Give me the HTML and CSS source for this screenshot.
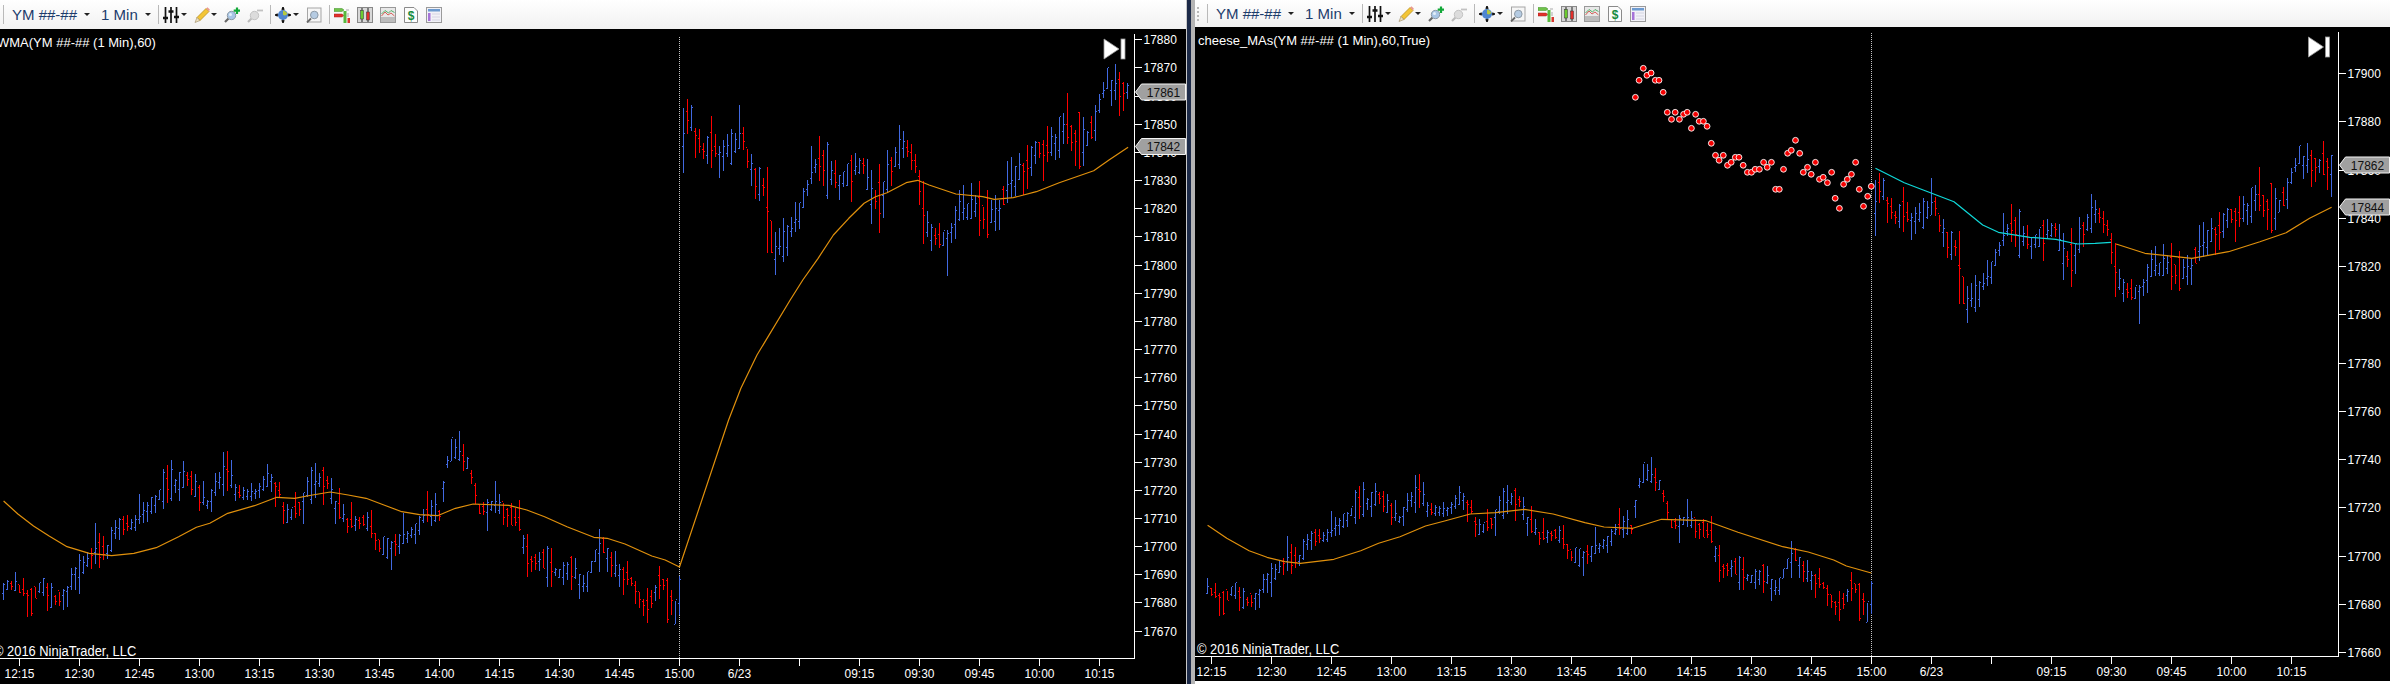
FILE: index.html
```html
<!DOCTYPE html>
<html lang="en">
<head>
<meta charset="utf-8">
<title>NinjaTrader charts</title>
<link rel="stylesheet" href="styles.css">
</head>
<body>
<svg class="sprite" aria-hidden="true">
  <symbol id="i-sliders" viewBox="0 0 16 16">
    <path d="M2.5 0v16M8 0v16M13.5 0v16" stroke="#111" stroke-width="1.7" fill="none"/>
    <path d="M0 11h5M5.5 4.5h5M11 10h5" stroke="#111" stroke-width="2.6" fill="none"/>
  </symbol>
  <symbol id="i-pencil" viewBox="0 0 16 16">
    <path d="M3 10.5 12 1.5l3 3-9 9z" fill="#f3c536" stroke="#b98f1e" stroke-width=".8"/>
    <path d="M3 10.5 1 15.5l5-2z" fill="#efe0bd" stroke="#9a8a60" stroke-width=".6"/>
    <path d="M12 1.500 13.500.2l2.300 2.300L15 4.500z" fill="#e99a8f"/>
  </symbol>
  <symbol id="i-zoomin" viewBox="0 0 16 16">
    <path d="M4.500 11.500 1 15" stroke="#666" stroke-width="2.200"/>
    <circle cx="7.500" cy="8.500" r="4.200" fill="#a9c6e6" stroke="#8d9aa6"/>
    <circle cx="6.500" cy="7.500" r="1.500" fill="#e4eff9"/>
    <path d="M13 .5v6.500M9.700 3.700h6.600" stroke="#12a838" stroke-width="2.200"/>
  </symbol>
  <symbol id="i-zoomout" viewBox="0 0 16 16">
    <path d="M4.500 11.500 1 15" stroke="#bbb" stroke-width="2.200"/>
    <circle cx="7.500" cy="8.500" r="4.200" fill="#dcdcdc" stroke="#c4c4c4"/>
    <path d="M10 3.500h6" stroke="#c2c2c2" stroke-width="1.800"/>
  </symbol>
  <symbol id="i-globe" viewBox="0 0 16 16">
    <path d="M8 0v16M0 8h16" stroke="#111" stroke-width="1.600"/>
    <path d="M8 0 10 2.500H6zM8 16l2-2.500H6zM0 8l2.500-2v4zM16 8l-2.500-2v4z" fill="#111"/>
    <circle cx="8" cy="8" r="5" fill="#4f86d0"/>
    <path d="M8 3.500q3.500.5 4.300 3.500-2 2.500-4.300.8z" fill="#b6c93f"/>
  </symbol>
  <symbol id="i-zoombox" viewBox="0 0 16 16">
    <rect x="1.500" y="1" width="13.500" height="14" fill="#f6f6f6" stroke="#a5a5a5"/>
    <path d="M5 11.500 1 15.500" stroke="#666" stroke-width="1.800"/>
    <circle cx="8.300" cy="8" r="3.800" fill="#b5cbe2" stroke="#8d9aa6"/>
  </symbol>
  <symbol id="i-indic" viewBox="0 0 16 16">
    <path d="M0 1.500h8l2 1.500-2 1.500H0z" fill="#6fc24a" stroke="#3c8f25" stroke-width=".5"/>
    <path d="M0 7h8l2 1.500-2 1.500H0z" fill="#e2302a" stroke="#a3211d" stroke-width=".5"/>
    <rect x="9.500" y="4" width="3" height="12" fill="#57b93d"/>
    <rect x="13.500" y="11" width="2.500" height="5" fill="#d9372e"/>
    <path d="M12 3h3M14 6v4" stroke="#aaa"/>
  </symbol>
  <symbol id="i-candles" viewBox="0 0 16 16">
    <rect x=".5" y=".5" width="15" height="15" fill="#d8d8d8" stroke="#888"/>
    <path d="M5 1v14M11 1v14" stroke="#222"/>
    <rect x="3.500" y="3.500" width="3" height="8.500" fill="#6bcb2f" stroke="#333" stroke-width=".5"/>
    <rect x="9.500" y="5" width="3" height="8" fill="#e22e2a" stroke="#333" stroke-width=".5"/>
  </symbol>
  <symbol id="i-lines" viewBox="0 0 16 16">
    <rect x=".5" y=".5" width="15" height="15" fill="#e8e8e8" stroke="#999"/>
    <rect x="1" y="10" width="14" height="5" fill="#bcbcbc"/>
    <path d="M1.500 9 5 5l3 3 3-2 3.500 3" stroke="#d8605a" fill="none"/>
    <path d="M1.500 7 5 3.500l3.500 2.500 2.500-2.500 3.500 2" stroke="#55b06a" fill="none"/>
  </symbol>
  <symbol id="i-dollar" viewBox="0 0 14 16">
    <path d="M.5.500h9.500l3.500 3.500v11.500H.5z" fill="#fcfcfc" stroke="#8a8a8a"/>
    <text x="7" y="12.800" class="dollar">$</text>
  </symbol>
  <symbol id="i-panel" viewBox="0 0 16 16">
    <rect x=".5" y=".5" width="15" height="15" fill="#f1f1f7" stroke="#9a9a9a"/>
    <rect x="2" y="2" width="12" height="2.500" fill="#6d9bd0"/>
    <rect x="2" y="6" width="2.500" height="8" fill="#a673d8"/>
    <path d="M6 7h8M6 10h8M6 13h8" stroke="#d5d5e2"/>
  </symbol>
</svg>

<main class="workspace">
  <section class="pane pane-left">
    <header class="toolbar toolbar-left">
      <span class="sep sep-first"></span>
      <span class="tb-label">YM ##-##</span><i class="caret"></i>
      <span class="tb-label tb-label-next">1 Min</span><i class="caret"></i>
      <span class="sep"></span>
      <svg class="tb-icon"><use href="#i-sliders"/></svg><i class="caret"></i>
      <svg class="tb-icon"><use href="#i-pencil"/></svg><i class="caret caret-tight"></i>
      <svg class="tb-icon"><use href="#i-zoomin"/></svg>
      <svg class="tb-icon"><use href="#i-zoomout"/></svg>
      <span class="sep"></span>
      <svg class="tb-icon"><use href="#i-globe"/></svg><i class="caret"></i>
      <svg class="tb-icon"><use href="#i-zoombox"/></svg>
      <span class="sep"></span>
      <svg class="tb-icon"><use href="#i-indic"/></svg>
      <svg class="tb-icon"><use href="#i-candles"/></svg>
      <svg class="tb-icon"><use href="#i-lines"/></svg>
      <svg class="tb-icon tb-icon-narrow"><use href="#i-dollar"/></svg>
      <svg class="tb-icon"><use href="#i-panel"/></svg>
    </header>
    <svg class="chart" id="chart-left"></svg>
  </section>
  <div class="divider"></div>
  <section class="pane pane-right">
    <header class="toolbar toolbar-right">
      <span class="grip"></span>
      <span class="sep sep-first"></span>
      <span class="tb-label">YM ##-##</span><i class="caret"></i>
      <span class="tb-label tb-label-next">1 Min</span><i class="caret"></i>
      <span class="sep"></span>
      <svg class="tb-icon"><use href="#i-sliders"/></svg><i class="caret"></i>
      <svg class="tb-icon"><use href="#i-pencil"/></svg><i class="caret caret-tight"></i>
      <svg class="tb-icon"><use href="#i-zoomin"/></svg>
      <svg class="tb-icon"><use href="#i-zoomout"/></svg>
      <span class="sep"></span>
      <svg class="tb-icon"><use href="#i-globe"/></svg><i class="caret"></i>
      <svg class="tb-icon"><use href="#i-zoombox"/></svg>
      <span class="sep"></span>
      <svg class="tb-icon"><use href="#i-indic"/></svg>
      <svg class="tb-icon"><use href="#i-candles"/></svg>
      <svg class="tb-icon"><use href="#i-lines"/></svg>
      <svg class="tb-icon tb-icon-narrow"><use href="#i-dollar"/></svg>
      <svg class="tb-icon"><use href="#i-panel"/></svg>
    </header>
    <svg class="chart" id="chart-right"></svg>
  </section>
</main>
<script src="chart.js"></script>
</body>
</html>
```
FILE: styles.css
```css
html, body { margin: 0; padding: 0; background: #fff; overflow: hidden; }
body { font-family: "Liberation Sans", Arial, sans-serif; }
.sprite { display: none; }
.dollar { font: bold 12px "Liberation Sans", Arial, sans-serif; fill: #148a3c; text-anchor: middle; }

.workspace { display: flex; align-items: flex-start; width: 2400px; height: 684px; }
.pane { display: flex; flex-direction: column; overflow: hidden; }
.pane-left { width: 1186px; height: 684px; }
.pane-right { width: 1195px; height: 681px; }

.divider {
  width: 9px; height: 684px; box-sizing: border-box;
  background: #b4b4b4;
  border-left: 1px solid #c8c8c8;
  box-shadow: inset 4px 0 0 #1c2a48;
}

.toolbar {
  display: flex; align-items: center; flex: none; box-sizing: border-box;
  background: linear-gradient(#ffffff, #f1f1f1);
  color: #1c3c6c; font-size: 15px;
}
.toolbar-left { height: 29px; padding-left: 3px; }
.toolbar-right { height: 27px; padding-left: 0; border-top-left-radius: 4px; }

.grip {
  width: 2px; height: 14px; margin-left: 2px; margin-right: 1px;
  background: repeating-linear-gradient(#b8b8b8 0 2px, transparent 2px 4px);
}
.toolbar-right .sep-first { margin-left: 7px; }

.sep { width: 1px; height: 19px; background: #b9b9b9; margin-left: 7px; flex: none; }
.sep-first { margin-left: 0; }
.tb-label { margin-left: 8px; white-space: nowrap; }
.tb-label-next { margin-left: 11px; }
.caret {
  width: 0; height: 0; margin-left: 7px; flex: none;
  border-left: 3px solid transparent; border-right: 3px solid transparent; border-top: 3px solid #222;
}
.tb-icon { width: 16px; height: 16px; margin-left: 7px; flex: none; display: block; }
.tb-icon-narrow { width: 14px; margin-left: 8px; margin-right: 1px; }
.sep + .tb-icon { margin-left: 4px; }
.tb-icon + .caret { margin-left: 2px; }
.tb-icon + .caret-tight { margin-left: 1px; }

.chart { display: block; flex: 1; width: 100%; background: #000; }
.axis { stroke: #fff; stroke-width: 1; fill: none; shape-rendering: crispEdges; }
.label { font-family: "Liberation Sans", Arial, sans-serif; font-size: 13px; fill: #fff; }
.label-mid { text-anchor: middle; }
.label-big { font-size: 14px; }
.session { stroke: #c4c4c4; stroke-width: 1; stroke-dasharray: 1 1; shape-rendering: crispEdges; }
.bars { fill: none; stroke-width: 1; shape-rendering: crispEdges; }
.bars-up { stroke: #4169e1; }
.bars-down { stroke: #ff0000; }
.ma { fill: none; stroke-width: 1.2; stroke-linejoin: round; }
.ma-orange { stroke: #e0900c; }
.ma-teal { stroke: #0fd8d8; }
.dot { fill: #f40000; stroke: #fff; stroke-width: .9; }
.tag { fill: #a0a0a0; stroke: #f4f4f4; stroke-width: 1; }
.tag-text { font-family: "Liberation Sans", Arial, sans-serif; font-size: 13px; fill: #111; text-anchor: middle; }
.replay { fill: #fff; stroke: #9a9a9a; stroke-width: .8; }
```
FILE: chart.js
```js
// Chart data is stored as pixel readings of the left chart; both charts map through price.
var Z4 = function (a) { return [a[0] / 2.24, 420 + a[1] / 3]; };
var Z3 = function (a) { return [600 + a[0] / 2.613, 20 + a[1] / 3]; };
var Z5 = function (a) { return [700 + a[0] / 2.24, 420 + a[1] / 3]; };
var Z7 = function (a) { return [1400 + a[0] / 1.568, 420 + a[1] / 3]; };
var Z6 = function (a) { return [1580 + a[0] / 1.912, 40 + a[1] / 3]; };

var LEFT = { top: 39.3, per: 2.816, base: 17880, dx: 0 };
var RIGHT = { top: 73, per: 2.4125, base: 17900, dx: 1192 };
var priceOf = function (y) { return LEFT.base - (y - LEFT.top) / LEFT.per; };
var yOf = function (s, p) { return s.top + (s.base - p) * s.per; };

var session1 = [[5,510],[20,490],[40,500],[70,530],[95,490],[120,540],[150,510],[170,450],[190,440],[210,390],[240,390],[265,310],[300,315],[325,270],[350,240],[370,190],[390,190],[420,170],[450,230],[465,250],[490,180],[510,150],[530,220],[570,220],[605,170],[625,210],[640,290],[670,260],[690,200],[730,170],[750,250],[780,310],[820,300],[850,370],[870,380],[910,350],[935,320],[960,270],[985,280],[1000,130],[1020,95],[1045,120],[1060,180],[1075,270],[1110,250],[1140,280],[1165,310],[1180,420],[1220,420],[1250,460],[1280,440],[1310,500],[1335,400],[1350,370],[1380,450],[1410,470],[1450,570],[1480,470],[1500,520],[1515,570],[1522,530]].map(Z4);
var session2 = [[215,350],[230,290],[250,340],[270,390],[290,370],[310,400],[350,380],[375,350],[385,400],[405,470],[430,500],[440,640],[460,690],[480,670],[500,630],[520,580],[545,490],[560,440],[580,420],[600,460],[625,480],[660,450],[690,430],[705,530],[730,540],[760,440],[795,370],[815,410],[830,440],[845,600],[865,640],[890,660],[915,640],[935,570],[960,570],[985,560],[1015,590],[1040,580],[1060,510],[1090,460],[1120,430],[1140,380],[1165,390],[1190,360],[1210,320],[1240,350],[1270,365],[1295,300],[1310,230],[1325,190],[1345,200],[1378,205],[1411,210]].map(Z3);
var anchors = session1.concat(session2);

var seed = 20160623;
function rnd() { seed = (seed * 1664525 + 1013904223) % 4294967296; return seed / 4294967296; }
function interp(x) {
  for (var i = 1; i < anchors.length; i++) {
    if (x <= anchors[i][0]) {
      var a = anchors[i - 1], b = anchors[i];
      return a[1] + (b[1] - a[1]) * (x - a[0]) / ((b[0] - a[0]) || 1);
    }
  }
  return anchors[anchors.length - 1][1];
}

// Tall bars read directly off the reference: [x, top, bottom, isUp].
var tall = [[683.5,107,172,1],[687.5,98,133,0],[691.5,104,130,1],[711.5,115,167,0],[767.5,166,252,0],[771.5,220,252,0],[775.5,231,274,1],[870,169,223,1],[879,163,232,0],[923,180,243,0],[1064,112,143,1],[1107,67,88,1],[227,450,490,0],[451,438,460,1],[527,533,576,0],[647,587,622,0],[668,577,622,0],[676,600,623,1],[387,537,558,1],[31,587,615,0],[99,532,567,0]];

var bars = [];
for (var k = 0; k < 285; k++) {
  var x = 3.5 + 4 * k;
  var m = interp(x), slope = interp(x + 5) - interp(x - 5);
  var up = rnd() < (slope < 0 ? 0.72 : slope > 3 ? 0.2 : 0.5);
  var boost = x > 680 ? 1.4 : 1;
  var a1 = (4 + rnd() * rnd() * 26) * boost, a2 = (4 + rnd() * rnd() * 26) * boost;
  var t = m - a1, l = m + a2;
  tall.forEach(function (o) {
    if (Math.abs(o[0] - x) <= 2) { t = o[1]; l = o[2]; up = !!o[3]; m = (t + l) / 2; a1 = a2 = (l - t) / 2; }
  });
  var body = 1 + rnd() * Math.min(a1, a2);
  bars.push({
    x: x, up: up,
    h: priceOf(t), l: priceOf(l),
    o: priceOf(m + (up ? body : -body)), c: priceOf(m + (up ? -body : body))
  });
}

var NS = "http://www.w3.org/2000/svg";
var SQUEEZE = 0.92;
function el(parent, name, attrs, text) {
  var e = document.createElementNS(NS, name);
  for (var key in attrs) e.setAttribute(key, attrs[key]);
  if (text !== undefined) e.textContent = text;
  parent.appendChild(e);
  return e;
}
// The reference's axis font is taller than it is wide: narrow the real text a little.
function narrowText(parent, attrs, text) {
  var e = el(parent, "text", attrs, text);
  e.setAttribute("textLength", (e.getComputedTextLength() * SQUEEZE).toFixed(1));
  e.setAttribute("lengthAdjust", "spacingAndGlyphs");
  return e;
}
function poly(points) {
  return points.map(function (p) { return p[0].toFixed(1) + "," + p[1].toFixed(1); }).join(" ");
}

function drawBars(svg, s, minX, maxX) {
  var paths = { up: "", down: "" };
  bars.forEach(function (b) {
    var x = b.x + s.dx;
    if (x < minX || x > maxX) return;
    var r = function (p) { return Math.round(yOf(s, p)) + 0.5; };
    var d = "M" + x + " " + r(b.h) + "V" + r(b.l) +
      "M" + (x - 1.5) + " " + r(b.o) + "h1M" + (x + 0.5) + " " + r(b.c) + "h1";
    paths[b.up ? "up" : "down"] += d;
  });
  el(svg, "path", { "class": "bars bars-up", d: paths.up });
  el(svg, "path", { "class": "bars bars-down", d: paths.down });
}

function drawChart(svg, cfg) {
  var s = cfg.scale;
  svg.setAttribute("viewBox", cfg.box.join(" "));
  svg.setAttribute("preserveAspectRatio", "xMinYMin meet");

  el(svg, "path", { "class": "session", d: "M" + cfg.session + " " + cfg.sessionTop + "V" + cfg.xAxis });
  drawBars(svg, s, cfg.minBar, cfg.maxBar);
  cfg.mas.forEach(function (m) {
    el(svg, "polyline", { "class": "ma " + m.cls, points: poly(m.pts) });
  });
  (cfg.dots || []).forEach(function (d) {
    el(svg, "circle", { "class": "dot", cx: d[0].toFixed(1), cy: d[1].toFixed(1), r: 2.9 });
  });

  // axes
  var ax = "M" + cfg.box[0] + " " + cfg.xAxis + "H" + cfg.yAxis + "V" + cfg.axisTop;
  cfg.prices.forEach(function (p) {
    var y = Math.round(yOf(s, p)) + 0.5;
    ax += "M" + cfg.yAxis + " " + y + "h7";
    narrowText(svg, { "class": "label", x: cfg.yAxis + 9, y: y + 4.5 }, p);
  });
  cfg.times.forEach(function (t, i) {
    var x = cfg.firstTick + 60 * i;
    ax += "M" + x + " " + cfg.xAxis + "v7";
    if (t) narrowText(svg, { "class": "label label-mid", x: x, y: cfg.xAxis + 19 }, t);
  });
  el(svg, "path", { "class": "axis", d: ax });

  el(svg, "text", { "class": "label", x: cfg.titleX, y: cfg.titleY }, cfg.title);
  narrowText(svg, { "class": "label label-big", x: cfg.copyX, y: cfg.xAxis - 3 }, "\u00a9 2016 NinjaTrader, LLC");

  // replay icon
  var rx = cfg.replay[0], ry = cfg.replay[1];
  el(svg, "path", { "class": "replay", d: "M" + rx + " " + ry + "l15 10-15 10z" });
  el(svg, "rect", { "class": "replay", x: rx + 17, y: ry, width: 4, height: 20 });

  // last-price tags sit over the axis
  cfg.tags.forEach(function (t) {
    var xa = cfg.yAxis + 1, y = t[1];
    el(svg, "polygon", { "class": "tag", points: poly([[xa, y], [xa + 6, y - 8], [xa + 50, y - 8], [xa + 50, y + 8], [xa + 6, y + 8]]) });
    narrowText(svg, { "class": "tag-text", x: xa + 28, y: y + 4.5 }, t[0]);
  });
}

function range(from, to, step) { var out = []; for (var p = from; p >= to; p -= step) out.push(p); return out; }
var times = ["12:15","12:30","12:45","13:00","13:15","13:30","13:45","14:00","14:15","14:30","14:45","15:00","6/23","","09:15","09:30","09:45","10:00","10:15"];

var maLeft = [[8,243],[40,282],[75,318],[110,348],[150,380],[200,400],[250,407],[300,400],[350,383],[400,350],[440,322],[470,310],[510,280],[570,257],[620,232],[660,235],[700,225],[740,216],[780,225],[820,235],[860,255],[900,275],[940,284],[980,287],[1020,265],[1060,252],[1140,256],[1180,270],[1220,290],[1270,320],[1330,352],[1360,355],[1400,372],[1460,408],[1490,420],[1522,441]].map(Z4)
  .concat([[728.6,420],[741,388],[757,355]])
  .concat([[497,840],[530,780],[570,715],[610,645],[650,595],[690,550],[720,530],[750,518],[800,488],[830,481],[860,495],[930,522],[1000,530],[1030,538],[1080,533],[1140,515],[1200,488],[1290,452],[1330,420],[1380,382]].map(Z3));

var maRight1 = [[1137,316],[1180,355],[1230,392],[1270,412],[1310,425],[1345,430],[1420,418],[1480,392],[1520,370],[1568,350]].map(Z5)
  .concat([[40,318],[70,303],[110,282],[150,278],[195,268],[240,282],[290,308],[320,321],[365,325],[410,298],[480,302],[530,337],[600,380],[640,396],[680,420],[700,438],[739,459]].map(Z7));
var teal = [[565,385],[620,428],[660,452],[715,485],[770,555],[800,577],[860,592],[910,598],[950,612],[985,610],[1015,607]].map(Z6);
var maRight2 = [[1025,612],[1080,640],[1170,655],[1240,635],[1300,605],[1350,578],[1395,535],[1437,502]].map(Z6);
var dots = [[106,172],[113,121],[121,85],[128,106],[136,99],[144,121],[151,121],[159,157],[167,217],[175,238],[182,217],[190,238],[198,223],[205,217],[213,265],[221,223],[228,244],[236,244],[243,259],[251,310],[259,346],[266,361],[274,346],[282,376],[289,367],[297,352],[304,352],[312,376],[320,397],[328,397],[335,388],[343,388],[351,367],[358,382],[366,367],[374,448],[381,448],[389,388],[397,340],[404,331],[412,301],[420,340],[427,397],[435,382],[442,403],[450,367],[458,418],[465,412],[473,428],[481,397],[488,475],[496,505],[504,433],[511,418],[519,403],[527,367],[534,448],[542,499],[550,469],[557,439]].map(Z6);

drawChart(document.getElementById("chart-left"), {
  scale: LEFT, box: [0, 29, 1186, 655],
  yAxis: 1134.5, xAxis: 658.5, axisTop: 34, session: 679.5, sessionTop: 37,
  minBar: 0, maxBar: 1128, firstTick: 19.5,
  prices: range(17880, 17670, 10), times: times,
  mas: [{ cls: "ma-orange", pts: maLeft }],
  title: "WMA(YM ##-## (1 Min),60)", titleX: -3, titleY: 47, copyX: -6,
  replay: [1104, 39], tags: [["17861", 92], ["17842", 146.5]]
});
drawChart(document.getElementById("chart-right"), {
  scale: RIGHT, box: [1195, 27, 1195, 654],
  yAxis: 2338.5, xAxis: 656.5, axisTop: 32, session: 1871.5, sessionTop: 33,
  minBar: 1205, maxBar: 2332, firstTick: 1211.5,
  prices: range(17900, 17660, 20), times: times,
  mas: [{ cls: "ma-orange", pts: maRight1 }, { cls: "ma-teal", pts: teal }, { cls: "ma-orange", pts: maRight2 }],
  dots: dots,
  title: "cheese_MAs(YM ##-## (1 Min),60,True)", titleX: 1198, titleY: 45, copyX: 1197,
  replay: [2308.5, 37], tags: [["17862", 165], ["17844", 207]]
});
```
